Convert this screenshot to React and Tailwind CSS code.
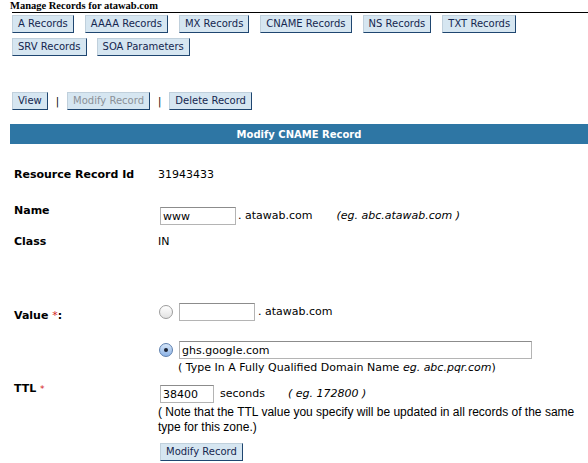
import React from "react";

function Btn({ children, disabled }) {
  return (
    <button
      type="button"
      className={`h-[18px] px-[5px] bg-[#d6e6f1] border border-solid border-t-[#c0d0dc] border-l-[#c0d0dc] border-r-[#1f4670] border-b-[#1f4670] text-[10px] leading-none font-['DejaVu_Sans',sans-serif] whitespace-nowrap ${
        disabled ? "text-[#8b9097]" : "text-[#15264f]"
      }`}
    >
      {children}
    </button>
  );
}

function Radio({ checked }) {
  return checked ? (
    <span className="w-[14px] h-[14px] rounded-full border border-[#5d7fae] bg-gradient-to-b from-[#d6e6f8] to-[#8db3e6] flex items-center justify-center shrink-0">
      <span className="w-[4px] h-[4px] rounded-full bg-[#1b2333]" />
    </span>
  ) : (
    <span className="w-[14px] h-[14px] rounded-full border border-[#9c9c9c] bg-gradient-to-b from-[#ffffff] to-[#e2e2e2] shrink-0" />
  );
}

function Input({ w, value }) {
  return (
    <div
      className={`${w} h-[18px] border border-[#b4b4b4] border-t-[#8c8c8c] bg-white pl-[2px] flex items-center text-[11px] leading-none text-black shrink-0`}
    >
      {value}
    </div>
  );
}

export default function App() {
  return (
    <div className="w-[588px] h-[463px] bg-white overflow-hidden font-['DejaVu_Sans',sans-serif] text-[11px] text-black">
      <div className="pl-[10px] h-[12px] leading-[12px] font-['Liberation_Serif',serif] font-bold text-[10.5px]">
        Manage Records for atawab.com
      </div>
      <div className="ml-[12px] h-[1px] bg-black" />

      <div className="ml-[12px] mt-[2px] flex flex-col gap-y-[5px]">
        <div className="flex gap-x-[11px]">
          <Btn>A Records</Btn>
          <Btn>AAAA Records</Btn>
          <Btn>MX Records</Btn>
          <Btn>CNAME Records</Btn>
          <Btn>NS Records</Btn>
          <Btn>TXT Records</Btn>
        </div>
        <div className="flex gap-x-[10px]">
          <Btn>SRV Records</Btn>
          <Btn>SOA Parameters</Btn>
        </div>
      </div>

      <div className="ml-[12px] mt-[36px] flex items-center">
        <Btn>View</Btn>
        <span className="mx-[8px] text-[10px]">|</span>
        <Btn disabled>Modify Record</Btn>
        <span className="mx-[8px] text-[10px]">|</span>
        <Btn>Delete Record</Btn>
      </div>

      <div className="ml-[10px] mt-[14px] h-[20px] bg-[#2e76a4] flex items-center justify-center text-white font-bold text-[10px]">
        Modify CNAME Record
      </div>

      <div className="ml-[14px]">
        <div className="mt-[25px] flex leading-[12px]">
          <div className="w-[144px] font-bold">Resource Record Id</div>
          <div>31943433</div>
        </div>

        <div className="mt-[24px] flex items-start">
          <div className="w-[144px] font-bold leading-[12px]">Name</div>
          <div className="mt-[2px] ml-[2px] flex items-center">
            <Input w="w-[76px]" value="www" />
            <span className="ml-[2px]">. atawab.com</span>
            <span className="ml-[24px] italic">(eg. abc.atawab.com )</span>
          </div>
        </div>

        <div className="mt-[11px] flex leading-[12px]">
          <div className="w-[144px] font-bold">Class</div>
          <div>IN</div>
        </div>

        <div className="mt-[55px] flex items-start">
          <div className="w-[144px] font-bold leading-[12px] pt-[7px]">
            Value <span className="text-[#d42020] font-normal">*</span>:
          </div>
          <div className="ml-[1px] flex items-center">
            <Radio />
            <span className="ml-[6px]">
              <Input w="w-[76px]" value="" />
            </span>
            <span className="ml-[3px]">. atawab.com</span>
          </div>
        </div>

        <div className="mt-[19px] flex items-start">
          <div className="w-[144px]" />
          <div className="ml-[1px] flex flex-col">
            <div className="flex items-center">
              <Radio checked />
              <span className="ml-[6px]">
                <Input w="w-[353px]" value="ghs.google.com" />
              </span>
            </div>
            <div className="ml-[19px] mt-[3px] leading-[12px] whitespace-nowrap">
              ( Type In A Fully Qualified Domain Name <span className="italic">eg. abc.pqr.com</span>)
            </div>
          </div>
        </div>

        <div className="mt-[11px] flex items-start">
          <div className="w-[144px] font-bold leading-[12px] -mt-[2px]">
            TTL <span className="text-[#d42020] font-normal text-[9px] align-top">*</span>
          </div>
          <div className="flex flex-col">
            <div className="ml-[2px] flex items-center">
              <Input w="w-[54px]" value="38400" />
              <span className="ml-[6px]">seconds</span>
              <span className="ml-[23px] italic">( eg. 172800 )</span>
            </div>
            <div className="mt-[2px] font-['Liberation_Sans',Arial,sans-serif] text-[12px] leading-[15px] whitespace-nowrap">
              ( Note that the TTL value you specify will be updated in all records of the same
              <br />
              type for this zone.)
            </div>
            <div className="mt-[8px] ml-[2px]">
              <Btn>Modify Record</Btn>
            </div>
          </div>
        </div>
      </div>
    </div>
  );
}
